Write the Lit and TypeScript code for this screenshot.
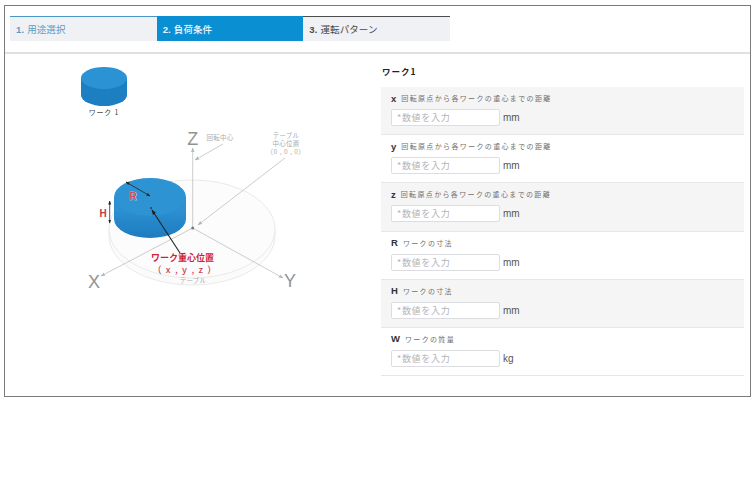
import { LitElement, html, css, svg } from "lit";
import { customElement } from "lit/decorators.js";

const rows = [
  { k: "x", t: "回転原点から各ワークの重心までの距離", u: "mm", alt: true },
  { k: "y", t: "回転原点から各ワークの重心までの距離", u: "mm", alt: false },
  { k: "z", t: "回転原点から各ワークの重心までの距離", u: "mm", alt: true },
  { k: "R", t: "ワークの寸法", u: "mm", alt: false },
  { k: "H", t: "ワークの寸法", u: "mm", alt: true },
  { k: "W", t: "ワークの質量", u: "kg", alt: false },
];

const diagram = svg`
  <defs>
    <marker id="ag" viewBox="0 0 8 8" refX="7" refY="4" markerWidth="6" markerHeight="6" orient="auto-start-reverse"><path d="M0 1L8 4L0 7z" fill="#b4b8ba"/></marker>
    <marker id="ak" viewBox="0 0 8 8" refX="7" refY="4" markerWidth="5" markerHeight="5" orient="auto-start-reverse"><path d="M0 1L8 4L0 7z" fill="#222"/></marker>
    <linearGradient id="side" x1="0" y1="0" x2="0" y2="1"><stop offset=".3" stop-color="#2c90d1"/><stop offset="1" stop-color="#1c7cbf"/></linearGradient>
  </defs>
  <path d="M39 108v7a83 49 0 0 0 166 0v-7" fill="#fbfbfb" stroke="#e3e4e4" stroke-width=".8"/>
  <ellipse cx="122" cy="108" rx="83" ry="49" fill="#fcfcfc" stroke="#e4e5e5" stroke-width=".8"/>
  <g stroke="#bcc0c2" stroke-width=".8" fill="none">
    <line x1="122.7" y1="107" x2="122.7" y2="27" marker-end="url(#ag)"/>
    <line x1="122.7" y1="107" x2="31" y2="155" marker-end="url(#ag)"/>
    <line x1="122.7" y1="107" x2="213" y2="157" marker-end="url(#ag)"/>
    <line x1="153" y1="23" x2="125" y2="39" marker-end="url(#ag)"/>
    <line x1="215" y1="37" x2="128" y2="104" marker-end="url(#ag)"/>
  </g>
  <circle cx="122.7" cy="107" r="1.5" fill="#777"/>
  <path d="M44 76v22a36 19 0 0 0 72 0V76z" fill="url(#side)"/>
  <ellipse cx="80" cy="76" rx="36" ry="19" fill="#2d93d3"/>
  <line x1="56" y1="61" x2="80" y2="75" stroke="#222" stroke-width=".8" marker-start="url(#ak)" marker-end="url(#ak)"/>
  <line x1="39.7" y1="80" x2="39.7" y2="102" stroke="#333" stroke-width=".8" marker-start="url(#ak)" marker-end="url(#ak)"/>
  <line x1="110" y1="132" x2="82" y2="89" stroke="#222" stroke-width="1.1" marker-end="url(#ak)"/>
  <circle cx="81" cy="87" r="1" fill="#15466b"/>
  <g class="ax"><text x="122.7" y="24" text-anchor="middle">Z</text><text x="24" y="167" text-anchor="middle">X</text><text x="220" y="166" text-anchor="middle">Y</text></g>
  <g class="note"><text x="150" y="19" text-anchor="middle">回転中心</text><text x="216" y="17" text-anchor="middle">テーブル</text><text x="216" y="25" text-anchor="middle">中心位置</text><text x="216" y="33" text-anchor="middle" class="wide">（0 , 0 , 0）</text><text x="123" y="162" text-anchor="middle">テーブル</text></g>
  <text class="r halo" x="63" y="79" text-anchor="middle">R</text>
  <text class="r" x="33" y="96" text-anchor="middle">H</text>
  <text class="rb" x="112.5" y="140" text-anchor="middle">ワーク重心位置</text>
  <text class="rb light" x="115" y="152" text-anchor="middle">（ x , y , z ）</text>
`;

@customElement("app-root")
export class AppRoot extends LitElement {
  static styles = css`
    :host { display: block; width: 756px; height: 491px; background: #fff; font-family: "Noto Sans CJK JP", "Liberation Sans", sans-serif; padding: 5px 0 0 4px; box-sizing: border-box; }
    .frame { width: 747px; height: 392px; box-sizing: border-box; border: 1px solid #7b7b7b; display: flex; flex-direction: column; }
    .head { height: 48px; flex: none; box-sizing: border-box; border-bottom: 2px solid #dfe0e1; padding: 10px 0 0 5px; }
    .tabs { display: flex; width: 440px; height: 25px; }
    .tab { flex: 1; box-sizing: border-box; border-top: 1px solid; background: #eff1f5; display: flex; align-items: center; padding-left: 6px; font-size: 9.5px; letter-spacing: .1px; }
    .tab b { font: 700 9.5px "Liberation Sans", sans-serif; margin-right: 3px; }
    .one { border-color: #4a97c4; color: #5b9dc4; }
    .two { border-color: #0a8fd3; background: #0a8fd3; color: #eaf6fd; font-weight: 500; }
    .three { border-color: #4d4d4d; color: #4a4a4a; }
    .body { flex: 1; display: flex; min-height: 0; }
    .left { width: 376px; flex: none; display: flex; flex-direction: column; }
    .work { align-self: flex-start; margin: 13px 0 0 76px; width: 46px; display: flex; flex-direction: column; align-items: center; gap: 2px; }
    .work svg { display: block; }
    .work span { font-size: 7px; letter-spacing: .8px; color: #444; line-height: 9px; white-space: nowrap; }
    .dia { display: block; margin: 4px 0 0 65px; }
    .dia .ax text { font: 18px "Liberation Sans", sans-serif; fill: #8f9496; }
    .dia .note text { font-size: 6.5px; fill: #a9adaf; letter-spacing: .2px; }
    .dia .note .wide { letter-spacing: .5px; }
    .dia .r { font: 700 10px "Liberation Sans", sans-serif; fill: #c4384a; }
    .dia .halo { fill: #d4485a; stroke: #e6eef5; stroke-width: .6px; paint-order: stroke; }
    .dia .rb { font-size: 9px; font-weight: 700; fill: #cf2233; }
    .dia .light { font-weight: 500; font-size: 9px; letter-spacing: 1.2px; fill: #c8404e; }
    .right { width: 363px; flex: none; }
    .title { font-size: 8.5px; font-weight: 700; letter-spacing: 1px; color: #222; height: 33px; padding: 11px 0 0 1px; box-sizing: border-box; line-height: 12px; }
    .row { height: 48.2px; box-sizing: border-box; border-bottom: 1px solid #e6e7e8; padding: 5px 0 0 10px; }
    .row.alt { background: #f5f5f6; }
    .lab { display: flex; align-items: center; height: 12px; margin-bottom: 5px; }
    .lab b { font: 700 9.5px "Liberation Sans", sans-serif; color: #333; margin-right: 5px; }
    .lab span { font-size: 7px; letter-spacing: 1.35px; color: #707070; white-space: nowrap; }
    .ctl { display: flex; align-items: center; gap: 3px; }
    .ctl input { width: 109px; height: 17px; box-sizing: border-box; border: 1px solid #dcdde0; border-radius: 2px; background: #fff; padding: 0 5px; font: 9px "Noto Sans CJK JP", sans-serif; letter-spacing: .7px; outline: none; }
    .ctl input::placeholder { color: #b2b4b8; opacity: 1; }
    .ctl span { font: 10px "Liberation Sans", sans-serif; color: #555; }
  `;

  render() {
    return html`
      <div class="frame">
        <div class="head">
          <div class="tabs">
            <div class="tab one"><b>1.</b>用途選択</div>
            <div class="tab two"><b>2.</b>負荷条件</div>
            <div class="tab three"><b>3.</b>運転パターン</div>
          </div>
        </div>
        <div class="body">
          <div class="left">
            <div class="work">
              <svg width="46" height="39" viewBox="0 0 46 39">
                <path d="M0 11v17a23 11 0 0 0 46 0V11z" fill="#1c7fc2"/>
                <ellipse cx="23" cy="11" rx="23" ry="11" fill="#2b92d3"/>
              </svg>
              <span>ワーク 1</span>
            </div>
            <svg class="dia" width="240" height="180" viewBox="0 0 240 180">${diagram}</svg>
          </div>
          <div class="right">
            <div class="title">ワーク1</div>
            ${rows.map(r => html`
              <div class="row ${r.alt ? "alt" : ""}">
                <div class="lab"><b>${r.k}</b><span>${r.t}</span></div>
                <div class="ctl"><input placeholder="*数値を入力" /><span>${r.u}</span></div>
              </div>`)}
          </div>
        </div>
      </div>
    `;
  }
}
